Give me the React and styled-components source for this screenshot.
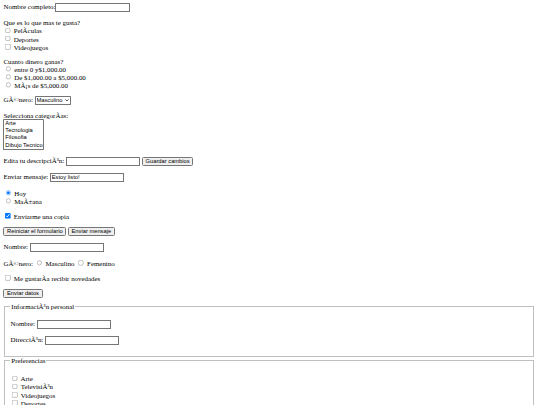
import React from 'react';
import styled, { createGlobalStyle } from 'styled-components';

const GlobalStyle = createGlobalStyle`
  html { zoom: 0.432; overflow: hidden; }
  body {
    margin: 8px 11px 8px 8px;
    background: #fff;
    color: #000;
    font-family: "Liberation Serif", "Times New Roman", serif;
    font-size: 16px;
  }
`;

const Page = styled.div``;

const Row = styled.div`
  margin: ${(p) => (p.$first ? '0 0 16.4px' : '16.4px 0')};
`;

const Title = styled.div``;

const Choice = styled.label`
  display: block;
`;

const TextField = styled.input.attrs({ type: 'text' })`
  font: 13.333px "Liberation Sans", Arial, sans-serif;
  box-sizing: border-box;
  width: 172px;
`;

const Button = styled.button`
  font: 13.333px "Liberation Sans", Arial, sans-serif;
`;

const SelectWrap = styled.span`
  position: relative;
  display: inline-block;
  vertical-align: baseline;
`;

const Select = styled.select`
  font: 13.333px "Liberation Sans", Arial, sans-serif;
  appearance: none;
  background: #fff;
  color: #000;
  border: 1px solid #767676;
  border-radius: 2px;
  padding: 1px 17px 1px 2px;
  margin: 0;
`;

const Chevron = styled.svg`
  position: absolute;
  right: 4px;
  top: 50%;
  width: 9px;
  height: 6px;
  margin-top: -3px;
  pointer-events: none;
`;

const ListBox = styled.select`
  font: 13.333px "Liberation Sans", Arial, sans-serif;
  display: block;
`;

const Box = styled.input``;

const Fieldset = styled.fieldset`
  margin: ${(p) => (p.$first ? '-4px 2px 0' : '0 2px')};
  border: 2px groove #c0c0c0;
  padding: 0.35em 0.75em 0.625em;
`;

const Legend = styled.legend`
  padding: 0 2px;
`;

const Prefs = styled.div`
  margin: 18.5px 0 16px;
`;

const gustos = ['Pel\u00C3\u00ADculas', 'Deportes', 'Videojuegos'];
const rangos = ['entre 0 y$1,000.00', 'De $1,000.00 a $5,000.00', 'M\u00C3\u00A1s de $5,000.00'];
const categorias = ['Arte', 'Tecnologia', 'Filosofia', 'Dibujo Tecnico'];
const prefs = ['Arte', 'Televisi\u00C3\u00B3n', 'Videojuegos', 'Deportes'];

export default function App() {
  return (
    <Page>
      <GlobalStyle />
      <Row $first>
        <label>Nombre completo:</label>
        <TextField />
      </Row>

      <Row>
        <Title>Que es lo que mas te gusta?</Title>
        {gustos.map((g) => (
          <Choice key={g}>
            <Box type="checkbox" /> {g}
          </Choice>
        ))}
      </Row>

      <Row>
        <Title>Cuanto dinero ganas?</Title>
        {rangos.map((r) => (
          <Choice key={r}>
            <Box type="radio" name="dinero" /> {r}
          </Choice>
        ))}
      </Row>

      <Row>
        G{'\u00C3\u00A9'}nero:{' '}
        <SelectWrap>
          <Select defaultValue="m">
            <option value="m">Masculino</option>
            <option value="f">Femenino</option>
          </Select>
          <Chevron viewBox="0 0 9 6">
            <path d="M1 1 L4.5 4.6 L8 1" fill="none" stroke="#000" strokeWidth="1.6" />
          </Chevron>
        </SelectWrap>
      </Row>

      <Row>
        <Title>Selecciona categor{'\u00C3\u00AD'}as:</Title>
        <ListBox multiple>
          {categorias.map((c) => (
            <option key={c}>{c}</option>
          ))}
        </ListBox>
      </Row>

      <Row>
        Edita tu descripci{'\u00C3\u00B3'}n: <TextField /> <Button>Guardar cambios</Button>
      </Row>

      <Row>
        Enviar mensaje: <TextField defaultValue="Estoy listo!" />
      </Row>

      <Row>
        <Choice>
          <Box type="radio" name="cuando" defaultChecked /> Hoy
        </Choice>
        <Choice>
          <Box type="radio" name="cuando" /> Ma{'\u00C3\u00B1'}ana
        </Choice>
      </Row>

      <Row>
        <Choice>
          <Box type="checkbox" defaultChecked /> Enviarme una copia
        </Choice>
      </Row>

      <Row>
        <Button>Reiniciar el formulario</Button> <Button>Enviar mensaje</Button>
      </Row>

      <Row>
        Nombre: <TextField />
      </Row>

      <Row>
        G{'\u00C3\u00A9'}nero: <Box type="radio" name="genero" /> Masculino{' '}
        <Box type="radio" name="genero" /> Femenino
      </Row>

      <Row>
        <Choice>
          <Box type="checkbox" /> Me gustar{'\u00C3\u00AD'}a recibir novedades
        </Choice>
      </Row>

      <Row>
        <Button>Enviar datos</Button>
      </Row>

      <Fieldset $first>
        <Legend>Informaci{'\u00C3\u00B3'}n personal</Legend>
        <Row>
          Nombre: <TextField />
        </Row>
        <Row>
          Direcci{'\u00C3\u00B3'}n: <TextField />
        </Row>
      </Fieldset>

      <Fieldset>
        <Legend>Preferencias</Legend>
        <Prefs>
          {prefs.map((p) => (
            <Choice key={p}>
              <Box type="checkbox" /> {p}
            </Choice>
          ))}
        </Prefs>
      </Fieldset>
    </Page>
  );
}
